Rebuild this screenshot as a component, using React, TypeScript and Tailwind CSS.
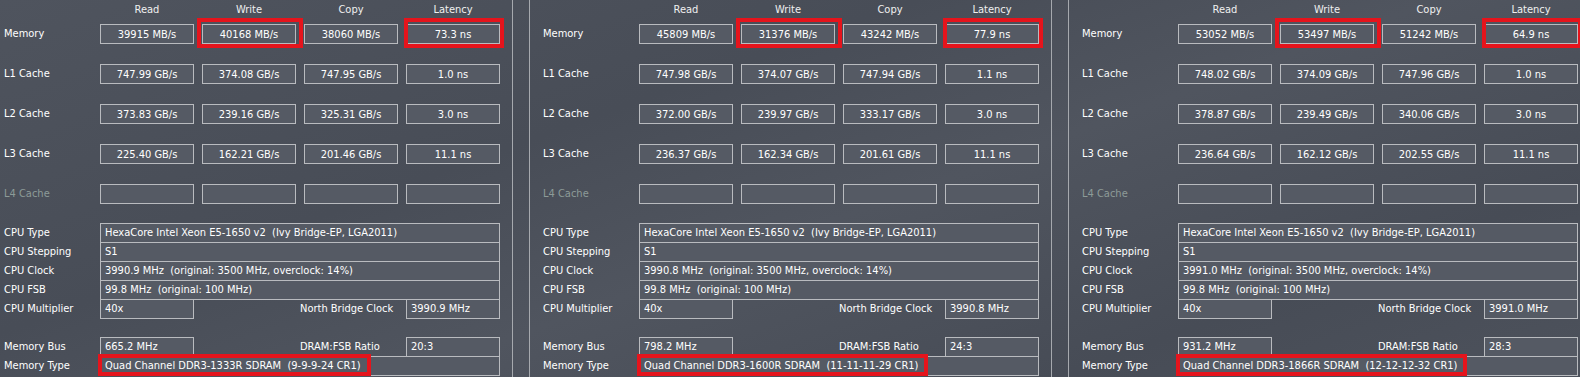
type Bench = {
  mem: string[]
  l1: string[]
  l2: string[]
  l3: string[]
  clock: string
  nb: string
  bus: string
  ratio: string
  memType: string
}

const PANELS: Bench[] = [
  {
    mem: ['39915 MB/s', '40168 MB/s', '38060 MB/s', '73.3 ns'],
    l1: ['747.99 GB/s', '374.08 GB/s', '747.95 GB/s', '1.0 ns'],
    l2: ['373.83 GB/s', '239.16 GB/s', '325.31 GB/s', '3.0 ns'],
    l3: ['225.40 GB/s', '162.21 GB/s', '201.46 GB/s', '11.1 ns'],
    clock: '3990.9 MHz',
    nb: '3990.9 MHz',
    bus: '665.2 MHz',
    ratio: '20:3',
    memType: 'Quad Channel DDR3-1333R SDRAM  (9-9-9-24 CR1)',
  },
  {
    mem: ['45809 MB/s', '31376 MB/s', '43242 MB/s', '77.9 ns'],
    l1: ['747.98 GB/s', '374.07 GB/s', '747.94 GB/s', '1.1 ns'],
    l2: ['372.00 GB/s', '239.97 GB/s', '333.17 GB/s', '3.0 ns'],
    l3: ['236.37 GB/s', '162.34 GB/s', '201.61 GB/s', '11.1 ns'],
    clock: '3990.8 MHz',
    nb: '3990.8 MHz',
    bus: '798.2 MHz',
    ratio: '24:3',
    memType: 'Quad Channel DDR3-1600R SDRAM  (11-11-11-29 CR1)',
  },
  {
    mem: ['53052 MB/s', '53497 MB/s', '51242 MB/s', '64.9 ns'],
    l1: ['748.02 GB/s', '374.09 GB/s', '747.96 GB/s', '1.0 ns'],
    l2: ['378.87 GB/s', '239.49 GB/s', '340.06 GB/s', '3.0 ns'],
    l3: ['236.64 GB/s', '162.12 GB/s', '202.55 GB/s', '11.1 ns'],
    clock: '3991.0 MHz',
    nb: '3991.0 MHz',
    bus: '931.2 MHz',
    ratio: '28:3',
    memType: 'Quad Channel DDR3-1866R SDRAM  (12-12-12-32 CR1)',
  },
]

const COLS = ['Read', 'Write', 'Copy', 'Latency']

function ValueBox({ value }: { value?: string }) {
  return (
    <div className="flex h-[20px] w-[94px] items-center justify-center border border-[#b9bbbf] bg-[#555a64] pt-px leading-[18px] text-white">
      {value}
    </div>
  )
}

function CacheRow({ label, values, dim }: { label: string; values?: string[]; dim?: boolean }) {
  return (
    <div className="flex h-[20px] items-center">
      <div className={`w-[96px] pt-px ${dim ? 'text-[#8d9b98]' : 'text-white'}`}>{label}</div>
      <div className="flex gap-[8px]">
        {[0, 1, 2, 3].map((i) => (
          <ValueBox key={i} value={values?.[i]} />
        ))}
      </div>
    </div>
  )
}

function InfoRow({ label, value, first }: { label: string; value: string; first?: boolean }) {
  return (
    <div className={`flex h-[20px] items-center ${first ? '' : '-mt-px'}`}>
      <div className="w-[96px]">{label}</div>
      <div className="h-[20px] w-[400px] whitespace-pre border border-[#b9bbbf] bg-[#555a64] pl-[4px] leading-[18px]">
        {value}
      </div>
    </div>
  )
}

function SplitRow({
  label, value, label2, value2, className = '',
}: { label: string; value: string; label2: string; value2: string; className?: string }) {
  return (
    <div className={`flex h-[20px] items-center ${className}`}>
      <div className="w-[96px]">{label}</div>
      <div className="h-[20px] w-[94px] border border-[#b9bbbf] bg-[#555a64] pl-[4px] leading-[18px]">{value}</div>
      <div className="w-[212px] pl-[106px]">{label2}</div>
      <div className="h-[20px] w-[94px] border border-[#b9bbbf] bg-[#555a64] pl-[4px] leading-[18px]">{value2}</div>
    </div>
  )
}

function Panel({ b }: { b: Bench }) {
  return (
    <div className="relative h-[377px] w-[523px] shrink-0 border-x border-[#a6a9ae] pl-[13px] text-white">
      <div className="flex h-[24px] pl-[96px]">
        {COLS.map((c) => (
          <div key={c} className="mr-[8px] w-[94px] pt-[2px] text-center leading-[16px] text-[#f0f0f0]">{c}</div>
        ))}
      </div>

      <div className="flex flex-col gap-[20px]">
        <CacheRow label="Memory" values={b.mem} />
        <CacheRow label="L1 Cache" values={b.l1} />
        <CacheRow label="L2 Cache" values={b.l2} />
        <CacheRow label="L3 Cache" values={b.l3} />
        <CacheRow label="L4 Cache" dim />
      </div>

      <div className="mt-[19px] flex flex-col">
        <InfoRow first label="CPU Type" value="HexaCore Intel Xeon E5-1650 v2  (Ivy Bridge-EP, LGA2011)" />
        <InfoRow label="CPU Stepping" value="S1" />
        <InfoRow label="CPU Clock" value={`${b.clock}  (original: 3500 MHz, overclock: 14%)`} />
        <InfoRow label="CPU FSB" value="99.8 MHz  (original: 100 MHz)" />
        <SplitRow className="-mt-px" label="CPU Multiplier" value="40x" label2="North Bridge Clock" value2={b.nb} />
        <SplitRow className="mt-[18px]" label="Memory Bus" value={b.bus} label2="DRAM:FSB Ratio" value2={b.ratio} />
        <div className="-mt-px flex h-[20px] items-center">
          <div className="w-[96px]">Memory Type</div>
          <div className="h-[20px] w-[400px] whitespace-pre border border-[#b9bbbf] bg-[#555a64] pl-[4px] leading-[18px]">
            <span className="relative inline-block">
              {b.memType}
              <span className="absolute -bottom-[1px] -left-[7px] -right-[10px] -top-[3px] border-[4px] border-[#e5141c]" />
            </span>
          </div>
        </div>
      </div>

      {/* highlight marks */}
      <div className="absolute left-[206px] top-[18px] h-[30px] w-[106px] border-[4px] border-[#e5141c]" />
      <div className="absolute left-[413px] top-[18px] h-[30px] w-[100px] border-[4px] border-[#e5141c]" />
    </div>
  )
}

export default function App() {
  return (
    <div
      className="h-[377px] w-[1580px] overflow-hidden bg-[linear-gradient(160deg,#4f545e_0%,#484d57_35%,#50555f_55%,#474c56_80%,#4d525c_100%)] text-[11px]"
      style={{ fontFamily: '"DejaVu Sans Condensed", "DejaVu Sans", sans-serif', fontStretch: 'condensed' }}
    >
      <div className="-ml-[10px] flex gap-[16px]">
        {PANELS.map((b, i) => (
          <Panel key={i} b={b} />
        ))}
      </div>
    </div>
  )
}
